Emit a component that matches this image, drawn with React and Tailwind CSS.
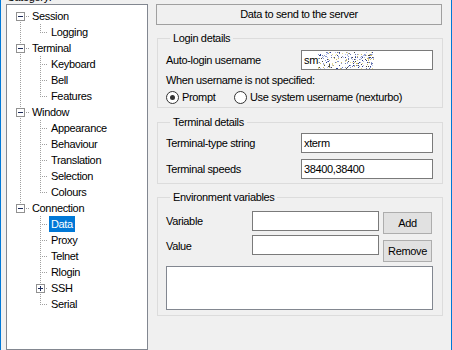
import React from "react";

// PuTTY-style config panel: category tree on the left, Connection > Data page on the right

const tree = [
  { label: "Session", depth: 0, toggle: "minus", pos: "first" },
  { label: "Logging", depth: 1, rootLine: true, last: true },
  { label: "Terminal", depth: 0, toggle: "minus", pos: "mid" },
  { label: "Keyboard", depth: 1, rootLine: true },
  { label: "Bell", depth: 1, rootLine: true },
  { label: "Features", depth: 1, rootLine: true, last: true },
  { label: "Window", depth: 0, toggle: "minus", pos: "mid" },
  { label: "Appearance", depth: 1, rootLine: true },
  { label: "Behaviour", depth: 1, rootLine: true },
  { label: "Translation", depth: 1, rootLine: true },
  { label: "Selection", depth: 1, rootLine: true },
  { label: "Colours", depth: 1, rootLine: true, last: true },
  { label: "Connection", depth: 0, toggle: "minus", pos: "last" },
  { label: "Data", depth: 1, selected: true },
  { label: "Proxy", depth: 1 },
  { label: "Telnet", depth: 1 },
  { label: "Rlogin", depth: 1 },
  { label: "SSH", depth: 1, toggle: "plus" },
  { label: "Serial", depth: 1, last: true },
];

const DOT = "#a0a0a0";

function vdots(x, y0, y1, k) {
  const out = [];
  for (let y = y0; y < y1; y++) {
    if (y % 2 === 0) out.push(<rect key={k + y} x={x} y={y} width="1" height="1" fill={DOT} />);
  }
  return out;
}

function hdots(x0, x1, y, k) {
  const out = [];
  for (let x = x0; x <= x1; x++) {
    if (x % 2 === 1) out.push(<rect key={k + x} x={x} y={y} width="1" height="1" fill={DOT} />);
  }
  return out;
}

function Toggle({ x, y, sign }) {
  return (
    <g>
      <rect x={x + 0.5} y={y + 0.5} width="8" height="8" fill="#fff" stroke="#919191" />
      <rect x={x + 2} y={y + 4} width="5" height="1" fill="#1c2a5a" />
      {sign === "plus" && <rect x={x + 4} y={y + 2} width="1" height="5" fill="#1c2a5a" />}
    </g>
  );
}

function Gutter({ row }) {
  if (row.depth === 0) {
    return (
      <svg width="23" height="16" className="shrink-0" shapeRendering="crispEdges">
        {row.pos !== "first" && vdots(13, 0, 4, "a")}
        {row.pos !== "last" && vdots(13, 13, 16, "b")}
        {hdots(18, 23, 8, "h")}
        <Toggle x={9} y={4} sign={row.toggle} />
      </svg>
    );
  }
  return (
    <svg width="42" height="16" className="shrink-0" shapeRendering="crispEdges">
      {row.rootLine && vdots(13, 0, 16, "r")}
      {row.toggle ? (
        <>
          {vdots(33, 0, 4, "a")}
          {!row.last && vdots(33, 13, 16, "b")}
          {hdots(38, 40, 8, "h")}
          <Toggle x={29} y={4} sign={row.toggle} />
        </>
      ) : (
        <>
          {vdots(33, 0, row.last ? 9 : 16, "c")}
          {hdots(34, 40, 8, "h")}
        </>
      )}
    </svg>
  );
}

// scrambled pixels standing in for the redacted part of the username
function Redacted() {
  const palette = ["#2b3f8f", "#8a98cc", "#cdb865", "#4a4a4a", "#b3bfe4", "#e3d894", "#6a79b0"];
  let seed = 7;
  const rand = () => {
    seed = (seed * 1103515245 + 12345) % 2147483648;
    return seed / 2147483648;
  };
  const dots = [];
  for (let y = 0; y < 17; y++) {
    for (let x = 0; x < 56; x++) {
      const r = rand();
      if (r < 0.22) {
        const c = palette[Math.floor(rand() * palette.length)];
        dots.push(<rect key={`${x}-${y}`} x={x} y={y} width="1" height="1" fill={c} />);
      }
    }
  }
  return (
    <svg width="56" height="17" className="shrink-0" shapeRendering="crispEdges">
      {dots}
    </svg>
  );
}

function Radio({ checked }) {
  return (
    <span className="w-[13px] h-[13px] rounded-full border border-[#333] bg-white flex items-center justify-center shrink-0">
      {checked && <span className="w-[5px] h-[5px] rounded-full bg-[#333]" />}
    </span>
  );
}

function Group({ title, className, children }) {
  return (
    <fieldset className={`ml-[9px] w-[286px] border border-[#dcdcdc] pl-[8px] ${className}`}>
      <legend className="ml-[4px] px-[3px] leading-[13px]">{title}</legend>
      {children}
    </fieldset>
  );
}

function Field({ label, value, children }) {
  return (
    <div className="flex items-center h-[20px]">
      <span className="w-[135px] shrink-0">{label}</span>
      <div className="w-[132px] h-[20px] border border-[#7a7a7a] bg-white flex items-center pl-[2px]">
        {value}
        {children}
      </div>
    </div>
  );
}

export default function App() {
  return (
    <div className="w-[452px] h-[350px] overflow-hidden bg-[#f0f0f0] border-x border-[#0078d7] flex font-['Liberation_Sans',Arial,sans-serif] text-[11px] tracking-[-0.35px] text-black">
      <div className="pl-[5px] w-[147px] shrink-0 flex flex-col">
        <div className="-mt-[9px] h-[13px] leading-[13px] pl-[1px]">Category:</div>
        <div className="h-[400px] border border-[#828790] bg-white pt-[3px]">
          {tree.map((row) => (
            <div key={row.label} className="flex h-[16px] items-center">
              <Gutter row={row} />
              <span
                className={`px-[2px] leading-[16px] h-[16px] ${
                  row.selected ? "bg-[#0078d7] text-white" : ""
                }`}
              >
                {row.label}
              </span>
            </div>
          ))}
        </div>
      </div>

      <div className="flex flex-col pt-[4px]">
        <div className="ml-[8px] w-[286px] h-[21px] border border-[#a0a0a0] flex items-center justify-center">
          Data to send to the server
        </div>

        <Group title="Login details" className="mt-[7px] pb-[3px]">
          <div className="mt-[5px]">
            <Field label="Auto-login username" value="sm">
              <Redacted />
            </Field>
          </div>
          <div className="mt-[4px] leading-[13px]">When username is not specified:</div>
          <div className="mt-[3px] flex items-center h-[14px]">
            <div className="w-[68px] flex items-center">
              <Radio checked />
              <span className="ml-[3px]">Prompt</span>
            </div>
            <Radio />
            <span className="ml-[3px]">Use system username (nexturbo)</span>
          </div>
        </Group>

        <Group title="Terminal details" className="mt-[8px] pb-[4px]">
          <div className="mt-[4px]">
            <Field label="Terminal-type string" value="xterm" />
          </div>
          <div className="mt-[6px]">
            <Field label="Terminal speeds" value="38400,38400" />
          </div>
        </Group>

        <Group title="Environment variables" className="mt-[7px] pb-[5px]">
          <div className="mt-[7px] flex">
            <div className="flex flex-col gap-[4px]">
              <div className="flex items-center h-[20px]">
                <span className="w-[86px]">Variable</span>
                <div className="w-[127px] h-[20px] border border-[#7a7a7a] bg-white" />
              </div>
              <div className="flex items-center h-[20px]">
                <span className="w-[86px] pt-[2px]">Value</span>
                <div className="w-[127px] h-[20px] border border-[#7a7a7a] bg-white" />
              </div>
            </div>
            <div className="ml-[4px] flex flex-col">
              <button className="mt-[1px] w-[49px] h-[22px] border border-[#adadad] bg-[#e1e1e1]">Add</button>
              <button className="mt-[6px] w-[49px] h-[22px] border border-[#adadad] bg-[#e1e1e1]">Remove</button>
            </div>
          </div>
          <div className="mt-[4px] w-[267px] h-[44px] border border-[#828790] bg-white" />
        </Group>
      </div>
    </div>
  );
}
